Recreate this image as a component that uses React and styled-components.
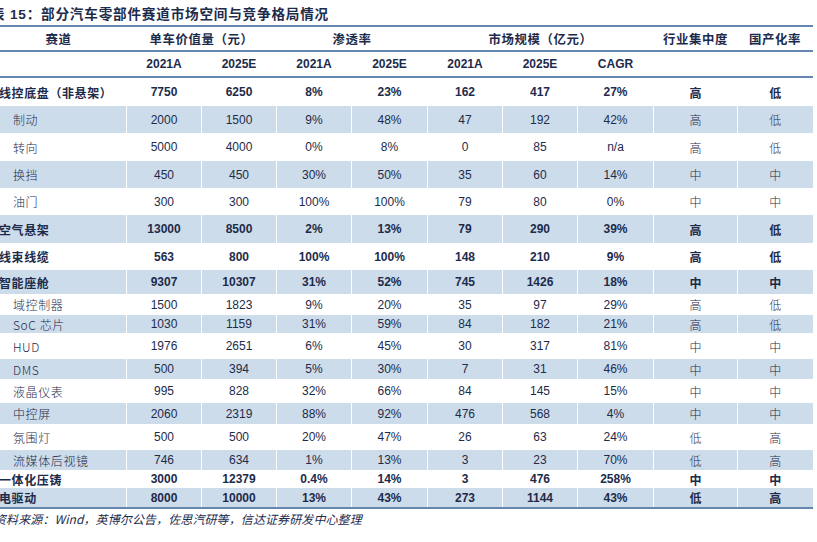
import React from "react"
import styled, { createGlobalStyle } from "styled-components"

const GlobalStyle = createGlobalStyle`
  body {
    margin: 0;
    background: #ffffff;
    font-family: "Liberation Sans", "Noto Sans CJK SC", sans-serif;
    color: #1d2b4b;
  }
`

const Page = styled.div`
  width: 817px;
  height: 542px;
  overflow: hidden;
  position: relative;
`

const Title = styled.div`
  margin-left: -9px;
  height: 25px;
  line-height: 29px;
  font-size: 13.6px;
  font-weight: bold;
  letter-spacing: 0.8px;
  color: #1d2b4b;
  font-family: "Liberation Sans", "Noto Sans CJK SC", sans-serif;
  white-space: nowrap;
`

const Table = styled.table`
  margin-left: -10px;
  width: 822px;
  border-collapse: collapse;
  table-layout: fixed;
  border-top: 2px solid #6686b2;
  border-bottom: 2px solid #6686b2;
  font-size: 12px;
`

const Col = styled.col`
  width: ${(p) => p.$w}px;
`

const HeadCell = styled.th`
  height: ${(p) => p.$h}px;
  padding: 0;
  font-weight: bold;
  font-family: ${(p) =>
    p.$cjk
      ? `"Noto Sans CJK SC", sans-serif`
      : `"Liberation Sans", "Noto Sans CJK SC", sans-serif`};
  font-size: ${(p) => (p.$cjk ? "12.4px" : "12px")};
  text-align: center;
  letter-spacing: ${(p) => (p.$cjk ? "0.6px" : "0")};
  border-bottom: 2px solid #6686b2;
  color: #1d2b4b;
  white-space: nowrap;
`

const Row = styled.tr`
  height: ${(p) => p.$h}px;
  background: ${(p) => (p.$shade ? "#cddcea" : "#ffffff")};
  font-weight: ${(p) => (p.$bold ? "bold" : "normal")};
`

const Cell = styled.td`
  padding: 0;
  text-align: center;
  border-left: 1px solid #ffffff;
  color: #1d2b4b;
  white-space: nowrap;
  font-family: "Liberation Sans", "Noto Sans CJK SC", sans-serif;
`

const NameCell = styled(Cell)`
  text-align: left;
  padding-left: ${(p) => (p.$sub ? 22 : 8)}px;
  letter-spacing: 0.6px;
  font-family: "Noto Sans CJK SC", sans-serif;
  font-weight: ${(p) => (p.$sub ? 300 : "bold")};
`

const LevelCell = styled(Cell)`
  font-family: "Noto Sans CJK SC", sans-serif;
  font-weight: ${(p) => (p.$bold ? "bold" : 300)};
`

const Source = styled.div`
  margin-left: -6px;
  margin-top: 1px;
  font-size: 12px;
  font-style: italic;
  letter-spacing: 0.1px;
  color: #1d2b4b;
  font-family: "Noto Sans CJK SC", sans-serif;
  white-space: nowrap;
`

const widths = [136, 75, 75, 75, 76, 75, 75, 76, 84, 75]

const rows = [
  { name: "线控底盘（非悬架）", v: ["7750", "6250", "8%", "23%", "162", "417", "27%"], c: "高", d: "低", h: 29, bold: true },
  { name: "制动", v: ["2000", "1500", "9%", "48%", "47", "192", "42%"], c: "高", d: "低", h: 27, shade: true },
  { name: "转向", v: ["5000", "4000", "0%", "8%", "0", "85", "n/a"], c: "高", d: "低", h: 28 },
  { name: "换挡", v: ["450", "450", "30%", "50%", "35", "60", "14%"], c: "中", d: "中", h: 27, shade: true },
  { name: "油门", v: ["300", "300", "100%", "100%", "79", "80", "0%"], c: "中", d: "中", h: 27 },
  { name: "空气悬架", v: ["13000", "8500", "2%", "13%", "79", "290", "39%"], c: "高", d: "低", h: 28, bold: true, shade: true },
  { name: "线束线缆", v: ["563", "800", "100%", "100%", "148", "210", "9%"], c: "高", d: "低", h: 27, bold: true },
  { name: "智能座舱", v: ["9307", "10307", "31%", "52%", "745", "1426", "18%"], c: "中", d: "中", h: 24, bold: true, shade: true },
  { name: "域控制器", v: ["1500", "1823", "9%", "20%", "35", "97", "29%"], c: "高", d: "低", h: 21 },
  { name: "SoC 芯片", v: ["1030", "1159", "31%", "59%", "84", "182", "21%"], c: "高", d: "低", h: 18, shade: true },
  { name: "HUD", v: ["1976", "2651", "6%", "45%", "30", "317", "81%"], c: "中", d: "中", h: 26 },
  { name: "DMS", v: ["500", "394", "5%", "30%", "7", "31", "46%"], c: "中", d: "中", h: 20, shade: true },
  { name: "液晶仪表", v: ["995", "828", "32%", "66%", "84", "145", "15%"], c: "中", d: "中", h: 24 },
  { name: "中控屏", v: ["2060", "2319", "88%", "92%", "476", "568", "4%"], c: "中", d: "中", h: 21, shade: true },
  { name: "氛围灯", v: ["500", "500", "20%", "47%", "26", "63", "24%"], c: "低", d: "高", h: 26 },
  { name: "流媒体后视镜", v: ["746", "634", "1%", "13%", "3", "23", "70%"], c: "低", d: "高", h: 20, shade: true },
  { name: "一体化压铸", v: ["3000", "12379", "0.4%", "14%", "3", "476", "258%"], c: "中", d: "中", h: 18, bold: true },
  { name: "电驱动", v: ["8000", "10000", "13%", "43%", "273", "1144", "43%"], c: "低", d: "高", h: 20, bold: true, shade: true },
]

const years = ["2021A", "2025E", "2021A", "2025E", "2021A", "2025E", "CAGR"]

export default function App() {
  return (
    <Page>
      <GlobalStyle />
      <Title>表 15：部分汽车零部件赛道市场空间与竞争格局情况</Title>
      <Table>
        <colgroup>
          {widths.map((w, i) => (
            <Col key={i} $w={w} />
          ))}
        </colgroup>
        <thead>
          <tr>
            <HeadCell $h={23} $cjk>赛道</HeadCell>
            <HeadCell $h={23} $cjk colSpan={2}>单车价值量（元）</HeadCell>
            <HeadCell $h={23} $cjk colSpan={2}>渗透率</HeadCell>
            <HeadCell $h={23} $cjk colSpan={3}>市场规模（亿元）</HeadCell>
            <HeadCell $h={23} $cjk>行业集中度</HeadCell>
            <HeadCell $h={23} $cjk>国产化率</HeadCell>
          </tr>
          <tr>
            <HeadCell $h={24} />
            {years.map((y, i) => (
              <HeadCell key={i} $h={24}>{y}</HeadCell>
            ))}
            <HeadCell $h={24} />
            <HeadCell $h={24} />
          </tr>
        </thead>
        <tbody>
          {rows.map((r) => (
            <Row key={r.name} $h={r.h} $shade={r.shade} $bold={r.bold}>
              <NameCell $sub={!r.bold}>{r.name}</NameCell>
              {r.v.map((x, i) => (
                <Cell key={i}>{x}</Cell>
              ))}
              <LevelCell $bold={r.bold}>{r.c}</LevelCell>
              <LevelCell $bold={r.bold}>{r.d}</LevelCell>
            </Row>
          ))}
        </tbody>
      </Table>
      <Source>资料来源：Wind，英博尔公告，佐思汽研等，信达证券研发中心整理</Source>
    </Page>
  )
}
